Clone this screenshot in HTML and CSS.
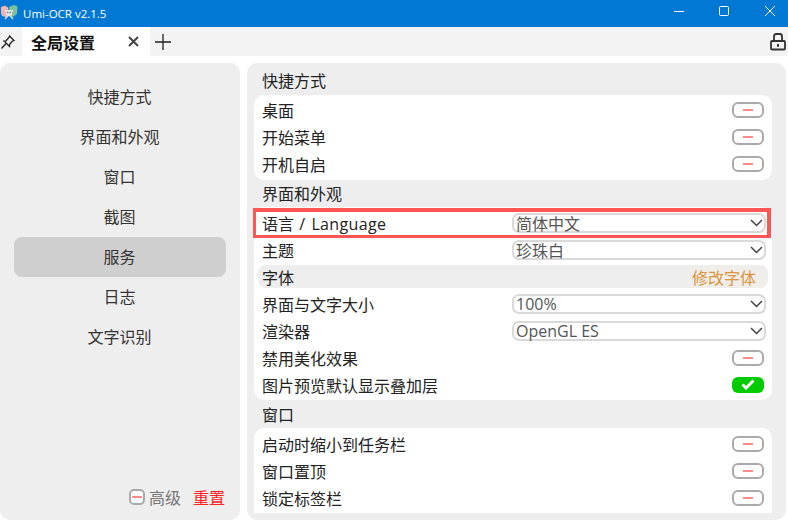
FILE: index.html
```html
<!DOCTYPE html>
<html lang="zh-CN">
<head>
<meta charset="utf-8">
<title>Umi-OCR v2.1.5</title>
<link rel="stylesheet" href="styles.css">
</head>
<body>
<header class="titlebar">
  <svg class="app-icon" width="18" height="16" viewBox="0 0 18 16">
    <path d="M1 3L5 1.500L8 3.500L9 9L6 13L2 12L1 9Z" fill="#f0b3b3"/>
    <path d="M9 3L14 1L17.500 2.500L17 10L13 13L10 11Z" fill="#7fc09c"/>
    <path d="M5 6L13 15M13 6L5 15" stroke="#e6e6e6" stroke-width="1.300"/>
    <circle cx="9" cy="9" r="3.200" fill="#e2e6e2"/>
    <circle cx="7.800" cy="8.500" r=".7" fill="#556"/><circle cx="10.200" cy="8.500" r=".7" fill="#556"/>
  </svg>
  <span class="app-title">Umi-OCR v2.1.5</span>
  <div class="win-controls">
    <svg class="win-btn" width="46" height="27" viewBox="0 0 46 27"><path d="M24 11.500H34" stroke="#fff"/></svg>
    <svg class="win-btn" width="46" height="27" viewBox="0 0 46 27"><rect x="23.500" y="6.500" width="9" height="9" rx="1" fill="none" stroke="#fff"/></svg>
    <svg class="win-btn" width="46" height="27" viewBox="0 0 46 27"><path d="M23 6L33 16M33 6L23 16" stroke="#fff"/></svg>
  </div>
</header>
<nav class="tabbar">
  <svg class="pin" width="16" height="16" viewBox="0 0 16 16"><path d="M9.500 2L14 6.500L12.500 7L9.500 10.500L9.500 12.500L4 7L6 6.800L9 3.500ZM5.800 9.800L1.500 14.500" fill="none" stroke="#222" stroke-width="1.300"/></svg>
  <div class="tab">
    <span class="tab-label">全局设置</span>
    <svg width="11" height="11" viewBox="0 0 11 11"><path d="M1 1L10 10M10 1L1 10" stroke="#444" stroke-width="2"/></svg>
  </div>
  <svg class="plus" width="18" height="18" viewBox="0 0 18 18"><path d="M9 1V17M1 9H17" stroke="#222" stroke-width="1.300"/></svg>
  <svg class="lock" width="16" height="18" viewBox="0 0 16 18"><path d="M4 8V3.500C4 2 5 1 6 1H10C11 1 12 2 12 3.500V8" fill="none" stroke="#333" stroke-width="1.800"/><rect x="1" y="8" width="14" height="8.500" rx="1" fill="none" stroke="#333" stroke-width="1.800"/><path d="M8 11V14M7 12H9" stroke="#222" stroke-width="1.300"/></svg>
</nav>
<main class="content">
  <aside class="sidebar">
    <ul class="side-list">
      <li class="side-item">快捷方式</li>
      <li class="side-item">界面和外观</li>
      <li class="side-item">窗口</li>
      <li class="side-item">截图</li>
      <li class="side-item active">服务</li>
      <li class="side-item">日志</li>
      <li class="side-item">文字识别</li>
    </ul>
    <div class="side-foot">
      <span class="mini-toggle"><i class="dash"></i></span>
      <span class="adv">高级</span>
      <span class="reset">重置</span>
    </div>
  </aside>
  <section class="settings">
    <h2 class="group-title">快捷方式</h2>
    <div class="card">
      <div class="row"><span>桌面</span><span class="switch"><i class="dash"></i></span></div>
      <div class="row"><span>开始菜单</span><span class="switch"><i class="dash"></i></span></div>
      <div class="row"><span>开机自启</span><span class="switch"><i class="dash"></i></span></div>
    </div>
    <h2 class="group-title">界面和外观</h2>
    <div class="card">
      <div class="row highlighted"><span>语言 <span class="wide">/ Language</span></span><div class="select"><span>简体中文</span><svg class="chev" width="13" height="8" viewBox="0 0 13 8"><path d="M1 1L6.500 6.500L12 1" fill="none" stroke="#444" stroke-width="1.500"/></svg></div></div>
      <div class="row"><span>主题</span><div class="select"><span>珍珠白</span><svg class="chev" width="13" height="8" viewBox="0 0 13 8"><path d="M1 1L6.500 6.500L12 1" fill="none" stroke="#444" stroke-width="1.500"/></svg></div></div>
      <div class="row sub-head"><span>字体</span><span class="font-btn">修改字体</span></div>
      <div class="row"><span>界面与文字大小</span><div class="select"><span>100%</span><svg class="chev" width="13" height="8" viewBox="0 0 13 8"><path d="M1 1L6.500 6.500L12 1" fill="none" stroke="#444" stroke-width="1.500"/></svg></div></div>
      <div class="row"><span>渲染器</span><div class="select"><span>OpenGL ES</span><svg class="chev" width="13" height="8" viewBox="0 0 13 8"><path d="M1 1L6.500 6.500L12 1" fill="none" stroke="#444" stroke-width="1.500"/></svg></div></div>
      <div class="row"><span>禁用美化效果</span><span class="switch"><i class="dash"></i></span></div>
      <div class="row"><span>图片预览默认显示叠加层</span><span class="switch on"><svg width="14" height="11" viewBox="0 0 14 11"><path d="M1.500 5.500L5 9L12.500 1.500" fill="none" stroke="#fff" stroke-width="3"/></svg></span></div>
    </div>
    <h2 class="group-title">窗口</h2>
    <div class="card last">
      <div class="row"><span>启动时缩小到任务栏</span><span class="switch"><i class="dash"></i></span></div>
      <div class="row"><span>窗口置顶</span><span class="switch"><i class="dash"></i></span></div>
      <div class="row"><span>锁定标签栏</span><span class="switch"><i class="dash"></i></span></div>
    </div>
  </section>
</main>
</body>
</html>
```
FILE: styles.css
```css
* { box-sizing: border-box; }
html, body { margin: 0; padding: 0; }
body {
  width: 788px;
  height: 526px;
  overflow: hidden;
  background: #fff;
  color: #222;
  font-family: "Open Sans", "Noto Sans CJK SC", sans-serif;
  font-size: 16px;
  display: flex;
  flex-direction: column;
}
.titlebar {
  height: 27px;
  flex: none;
  background: #0078d4;
  color: #fff;
  display: flex;
  align-items: center;
  font-size: 12px;
}
.app-icon { margin-left: 0; margin-right: 5px; margin-top: -3px; flex: none; }
.app-title { font-family: "Open Sans", sans-serif; font-size: 11.5px; }
.win-controls { margin-left: auto; display: flex; }
.win-btn { display: block; }
.tabbar {
  height: 29px;
  flex: none;
  background: #f3f3f3;
  display: flex;
  align-items: center;
}
.pin { margin-left: 0; flex: none; width: 16px; }
.tab {
  margin-left: 6px;
  width: 128px;
  height: 29px;
  background: #fff;
  display: flex;
  align-items: center;
  justify-content: space-between;
  padding: 0 11px 0 9px;
}
.tab-label { font-weight: 700; font-size: 16px; color: #111; }
.plus { margin-left: 4px; }
.lock { margin-left: auto; margin-right: 2px; }
.content {
  flex: none;
  height: 457px;
  margin-top: 7px;
  display: flex;
  gap: 7px;
}
.sidebar {
  width: 240px;
  flex: none;
  background: #eee;
  border-radius: 10px;
  padding: 14px 14px 0;
  display: flex;
  flex-direction: column;
}
.side-list { list-style: none; margin: 0; padding: 0; }
.side-item {
  height: 40px;
  padding: 0 1px 2px 0;
  display: flex;
  align-items: center;
  justify-content: center;
  border-radius: 8px;
  color: #333;
}
.side-item.active { background: #cfcfcf; }
.side-foot {
  margin-top: auto;
  height: 22px;
  margin-bottom: 12px;
  margin-right: 1px;
  display: flex;
  align-items: center;
  justify-content: flex-end;
}
.mini-toggle {
  width: 16px;
  height: 16px;
  border: 2px solid #aaa;
  border-radius: 5px;
  background: #fff;
  display: flex;
  align-items: center;
  justify-content: center;
  margin-right: 4px;
}
.mini-toggle .dash { width: 10px; }
.adv { color: #777; margin-right: 12px; }
.reset { color: #f22; }
.settings {
  flex: 1;
  background: #eee;
  border-radius: 10px;
  margin-right: 2px;
  padding: 0 14px 7px 7px;
  display: flex;
  flex-direction: column;
}
.group-title {
  margin: 0;
  height: 28px;
  padding: 0 0 1px 8px;
  display: flex;
  align-items: center;
  font-size: 16px;
  font-weight: 400;
  color: #222;
}
.group-title:first-child { height: 32px; padding-top: 3px; }
.card { background: #fff; border-radius: 10px; padding: 2px 0; }
.card.last { border-radius: 10px 10px 0 0; }
.row {
  height: 27px;
  padding: 0 8px;
  display: flex;
  align-items: center;
  justify-content: space-between;
  color: #222;
}
.wide { letter-spacing: .35px; word-spacing: 1.5px; margin-left: 1px; }
.highlighted { position: relative; }
.highlighted::after {
  content: "";
  position: absolute;
  inset: -1px 1px -2px -1px;
  border-style: solid;
  border-color: #f55;
  border-width: 4px 4px 3px 3px;
  pointer-events: none;
}
.sub-head {
  background: #eee;
  border-radius: 8px;
  height: 23px;
  margin: 2px 4px;
  padding: 0 3px 0 4px;
}
.font-btn {
  color: #d9953f;
  background: #f0eeea;
  border-radius: 8px;
  width: 81px;
  height: 23px;
  padding-right: 1px;
  display: flex;
  align-items: center;
  justify-content: center;
}
.select {
  width: 254px;
  height: 20px;
  margin-right: -2px;
  border: 2px solid #d9d9d9;
  border-radius: 7px;
  background: #fff;
  display: flex;
  align-items: center;
  justify-content: space-between;
  padding: 0 1px 0 2px;
  color: #555;
}
.chev { flex: none; }
.switch {
  width: 32px;
  height: 16px;
  border: 2px solid #aaa;
  border-radius: 6px;
  background: #fff;
  display: flex;
  align-items: center;
  justify-content: center;
}
.dash {
  display: block;
  width: 10px;
  height: 2px;
  background: #ff8a8a;
}
.switch.on { background: #0c0; border: none; }
```
